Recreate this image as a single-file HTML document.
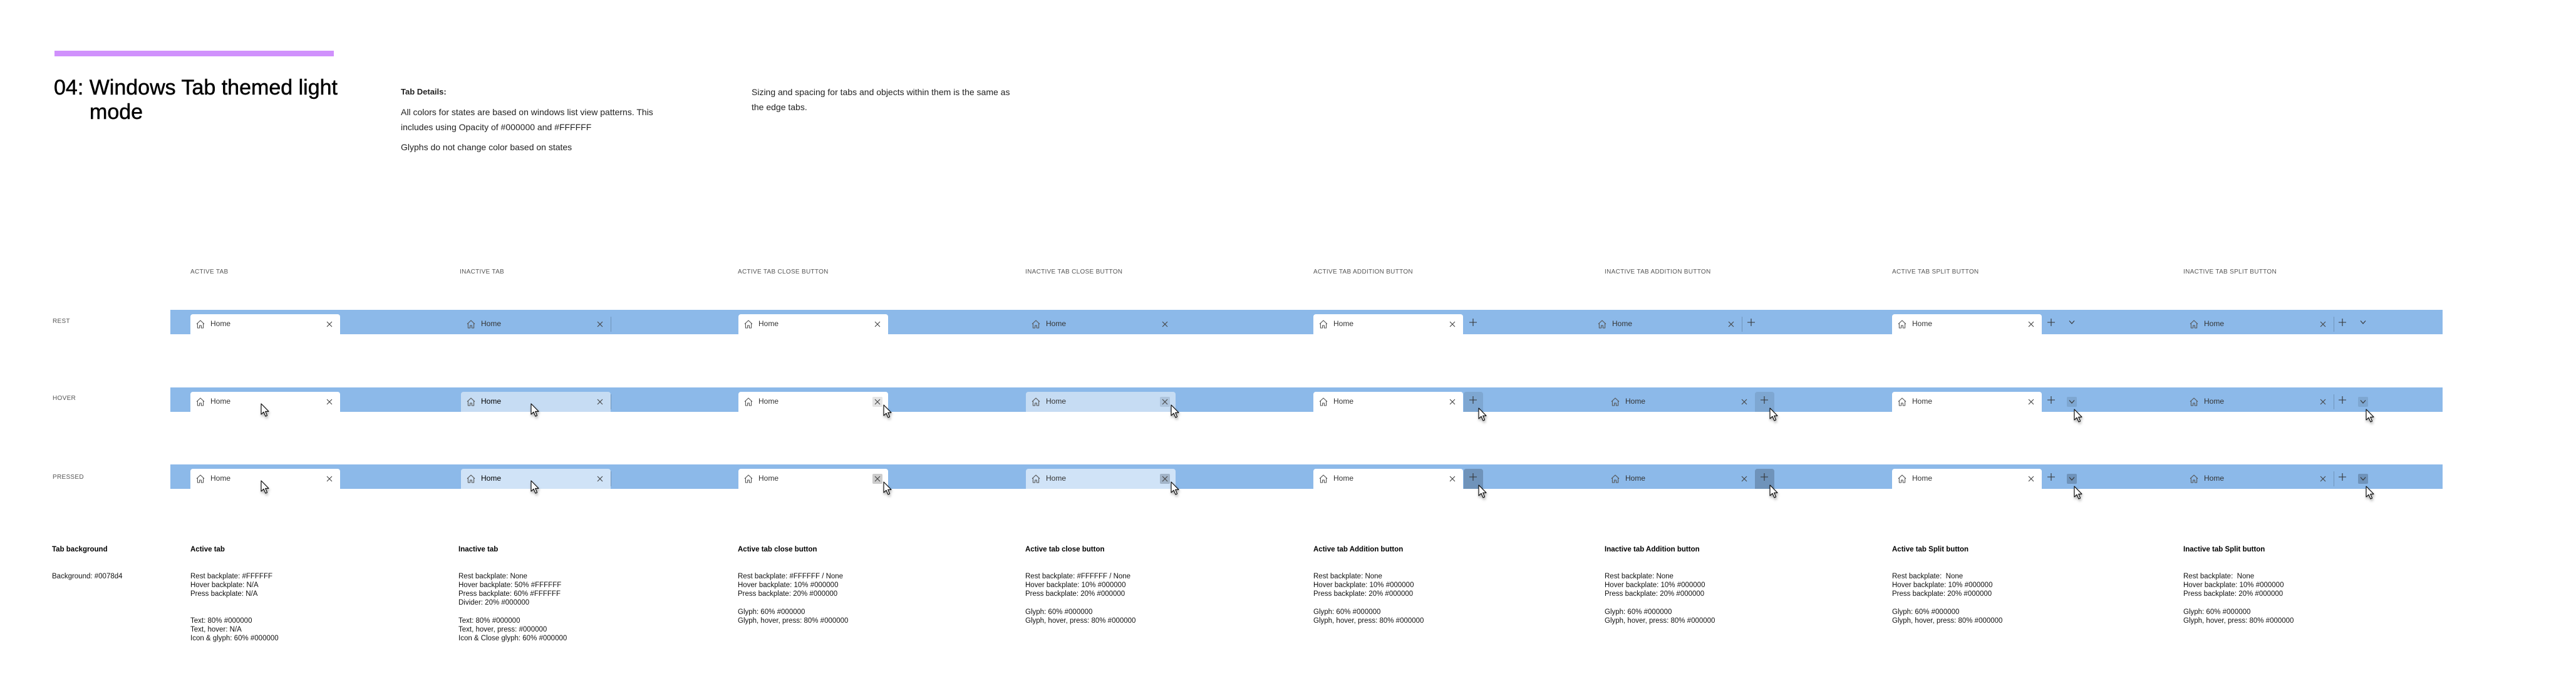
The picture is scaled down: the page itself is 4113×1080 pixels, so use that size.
<!DOCTYPE html>
<html><head><meta charset="utf-8">
<style>
*{margin:0;padding:0;box-sizing:border-box}
body{width:4113px;height:1080px;background:#fff;position:relative;overflow:hidden;font-family:"Liberation Sans",sans-serif;color:#000}
.a{position:absolute;white-space:nowrap}
.bar{position:absolute;left:87px;top:81px;width:446px;height:9px;background:#D091FC}
.title{font-size:34px;line-height:39px;-webkit-text-stroke:0.5px #000}
.p{font-size:14px;color:#222}
.hd{font-size:10px;color:#555;letter-spacing:0.3px}
.band{position:absolute;left:272px;width:3628px;height:39px;background:#8CB9E9}
.tab{position:absolute;width:239px;height:32px;border-radius:4px 4px 0 0}
.tab .h{position:absolute;left:9px;top:9px}
.tab .t{position:absolute;left:32px;top:8px;font-size:12px;color:#333}
.tab .x{position:absolute;left:214px;top:8px;width:16px;height:16px;border-radius:2px}
.x svg{position:absolute;left:3px;top:3px}
.w{background:#fff}
.hv{background:#C6DCF3}
.pr{background:#D0E3F7}
.div{position:absolute;width:1px;height:24px;background:rgba(0,0,0,.2)}
.btn{position:absolute;width:31px;height:32px;border-radius:4px 4px 0 0}
.sbtn{position:absolute;width:16px;height:16px;border-radius:2px}
.g{position:absolute}
.cur{position:absolute;filter:drop-shadow(1px 3px 2px rgba(0,0,0,.35))}
.b{font-size:11.5px;line-height:14px;color:#111}
.bh{font-size:11.5px;font-weight:bold;color:#000}
</style></head><body>
<div class="bar"></div>
<div class="a title" style="left:86px;top:121px">04: Windows Tab themed light</div>
<div class="a title" style="left:143px;top:160px">mode</div>
<div class="a p" style="left:640px;top:139px;font-weight:bold;font-size:13px">Tab Details:</div>
<div class="a p" style="left:640px;top:171px">All colors for states are based on windows list view patterns. This</div>
<div class="a p" style="left:640px;top:195px">includes using Opacity of #000000 and #FFFFFF</div>
<div class="a p" style="left:640px;top:227px">Glyphs do not change color based on states</div>
<div class="a p" style="left:1200px;top:139px">Sizing and spacing for tabs and objects within them is the same as</div>
<div class="a p" style="left:1200px;top:163px">the edge tabs.</div>

<div class="a hd" style="left:304px;top:429px">ACTIVE TAB</div>
<div class="a hd" style="left:734px;top:429px">INACTIVE TAB</div>
<div class="a hd" style="left:1178px;top:429px">ACTIVE TAB CLOSE BUTTON</div>
<div class="a hd" style="left:1637px;top:429px">INACTIVE TAB CLOSE BUTTON</div>
<div class="a hd" style="left:2097px;top:429px">ACTIVE TAB ADDITION BUTTON</div>
<div class="a hd" style="left:2562px;top:429px">INACTIVE TAB ADDITION BUTTON</div>
<div class="a hd" style="left:3021px;top:429px">ACTIVE TAB SPLIT BUTTON</div>
<div class="a hd" style="left:3486px;top:429px">INACTIVE TAB SPLIT BUTTON</div>

<div class="a hd" style="left:84px;top:508px">REST</div>
<div class="a hd" style="left:84px;top:631px">HOVER</div>
<div class="a hd" style="left:84px;top:757px">PRESSED</div>

<svg width="0" height="0" style="position:absolute">
<defs>
<symbol id="home" viewBox="0 0 14 14"><path d="M1 6.6 7 1l6 5.6M2.4 5.4V13h3.2V9h2.8v4h3.2V5.4" fill="none" stroke="#555" stroke-width="1.1" stroke-linejoin="round"/></symbol>
<symbol id="xx" viewBox="0 0 10 10"><path d="M1 1 9 9M9 1 1 9" stroke="#444" stroke-width="1.1"/></symbol>
<symbol id="pl" viewBox="0 0 12 12"><path d="M6 0V12M0 6H12" stroke="#333" stroke-width="1.1"/></symbol>
<symbol id="ch" viewBox="0 0 10 6"><path d="M1 .5 5 5 9 .5" fill="none" stroke="#333" stroke-width="1.1"/></symbol>
<symbol id="cu" viewBox="0 0 14 22"><path d="M1 1V18L5 14.2 8 21 10.6 19.9 7.7 13.3H13Z" fill="#fff" stroke="#000" stroke-width="1.1" stroke-linejoin="round"/></symbol>
</defs></svg>

<!-- bands -->
<div class="band" style="top:495px"></div>
<div class="band" style="top:619px"></div>
<div class="band" style="top:742px"></div>

<!-- ROW REST (495) -->
<div class="tab w" style="left:304px;top:502px"><svg class="h" width="14" height="14"><use href="#home"/></svg><span class="t">Home</span><span class="x"><svg width="10" height="10"><use href="#xx"/></svg></span></div>
<div class="tab" style="left:736px;top:502px"><svg class="h" width="14" height="14"><use href="#home"/></svg><span class="t">Home</span><span class="x"><svg width="10" height="10"><use href="#xx"/></svg></span></div>
<div class="div" style="left:975px;top:506px"></div>
<div class="tab w" style="left:1179px;top:502px"><svg class="h" width="14" height="14"><use href="#home"/></svg><span class="t">Home</span><span class="x"><svg width="10" height="10"><use href="#xx"/></svg></span></div>
<div class="tab" style="left:1638px;top:502px"><svg class="h" width="14" height="14"><use href="#home"/></svg><span class="t">Home</span><span class="x"><svg width="10" height="10"><use href="#xx"/></svg></span></div>
<div class="tab w" style="left:2097px;top:502px"><svg class="h" width="14" height="14"><use href="#home"/></svg><span class="t">Home</span><span class="x"><svg width="10" height="10"><use href="#xx"/></svg></span></div>
<svg class="g" style="left:2346px;top:509px" width="12" height="12"><use href="#pl"/></svg>
<div class="tab" style="left:2542px;top:502px"><svg class="h" width="14" height="14"><use href="#home"/></svg><span class="t">Home</span><span class="x"><svg width="10" height="10"><use href="#xx"/></svg></span></div>
<div class="div" style="left:2781px;top:506px"></div>
<svg class="g" style="left:2790px;top:509px" width="12" height="12"><use href="#pl"/></svg>
<div class="tab w" style="left:3021px;top:502px"><svg class="h" width="14" height="14"><use href="#home"/></svg><span class="t">Home</span><span class="x"><svg width="10" height="10"><use href="#xx"/></svg></span></div>
<svg class="g" style="left:3269px;top:509px" width="12" height="12"><use href="#pl"/></svg>
<svg class="g" style="left:3303px;top:512px" width="10" height="6"><use href="#ch"/></svg>
<div class="tab" style="left:3487px;top:502px"><svg class="h" width="14" height="14"><use href="#home"/></svg><span class="t">Home</span><span class="x"><svg width="10" height="10"><use href="#xx"/></svg></span></div>
<div class="div" style="left:3726px;top:506px"></div>
<svg class="g" style="left:3734px;top:509px" width="12" height="12"><use href="#pl"/></svg>
<svg class="g" style="left:3768px;top:512px" width="10" height="6"><use href="#ch"/></svg>

<!-- ROW HOVER (619) -->
<div class="tab w" style="left:304px;top:626px"><svg class="h" width="14" height="14"><use href="#home"/></svg><span class="t">Home</span><span class="x"><svg width="10" height="10"><use href="#xx"/></svg></span></div>
<div class="tab hv" style="left:736px;top:626px"><svg class="h" width="14" height="14"><use href="#home"/></svg><span class="t" style="color:#000">Home</span><span class="x"><svg width="10" height="10"><use href="#xx"/></svg></span></div>
<div class="div" style="left:975px;top:630px"></div>
<div class="tab w" style="left:1179px;top:626px"><svg class="h" width="14" height="14"><use href="#home"/></svg><span class="t">Home</span><span class="x" style="background:#E5E5E5"><svg width="10" height="10"><use href="#xx"/></svg></span></div>
<div class="tab hv" style="left:1638px;top:626px"><svg class="h" width="14" height="14"><use href="#home"/></svg><span class="t">Home</span><span class="x" style="background:#AEC4DC"><svg width="10" height="10"><use href="#xx"/></svg></span></div>
<div class="tab w" style="left:2097px;top:626px"><svg class="h" width="14" height="14"><use href="#home"/></svg><span class="t">Home</span><span class="x"><svg width="10" height="10"><use href="#xx"/></svg></span></div>
<div class="btn" style="left:2337px;top:626px;background:#7EA7D2"></div>
<svg class="g" style="left:2346px;top:633px" width="12" height="12"><use href="#pl"/></svg>
<div class="tab" style="left:2563px;top:626px"><svg class="h" width="14" height="14"><use href="#home"/></svg><span class="t">Home</span><span class="x"><svg width="10" height="10"><use href="#xx"/></svg></span></div>
<div class="btn" style="left:2802px;top:626px;background:#7EA7D2"></div>
<svg class="g" style="left:2811px;top:633px" width="12" height="12"><use href="#pl"/></svg>
<div class="tab w" style="left:3021px;top:626px"><svg class="h" width="14" height="14"><use href="#home"/></svg><span class="t">Home</span><span class="x"><svg width="10" height="10"><use href="#xx"/></svg></span></div>
<svg class="g" style="left:3269px;top:633px" width="12" height="12"><use href="#pl"/></svg>
<div class="sbtn" style="left:3300px;top:634px;background:#7EA7D2"></div>
<svg class="g" style="left:3303px;top:639px" width="10" height="6"><use href="#ch"/></svg>
<div class="tab" style="left:3487px;top:626px"><svg class="h" width="14" height="14"><use href="#home"/></svg><span class="t">Home</span><span class="x"><svg width="10" height="10"><use href="#xx"/></svg></span></div>
<div class="div" style="left:3726px;top:630px"></div>
<svg class="g" style="left:3734px;top:633px" width="12" height="12"><use href="#pl"/></svg>
<div class="sbtn" style="left:3765px;top:634px;background:#7EA7D2"></div>
<svg class="g" style="left:3768px;top:639px" width="10" height="6"><use href="#ch"/></svg>

<!-- ROW PRESSED (742) -->
<div class="tab w" style="left:304px;top:749px"><svg class="h" width="14" height="14"><use href="#home"/></svg><span class="t">Home</span><span class="x"><svg width="10" height="10"><use href="#xx"/></svg></span></div>
<div class="tab pr" style="left:736px;top:749px"><svg class="h" width="14" height="14"><use href="#home"/></svg><span class="t" style="color:#000">Home</span><span class="x"><svg width="10" height="10"><use href="#xx"/></svg></span></div>
<div class="div" style="left:975px;top:753px"></div>
<div class="tab w" style="left:1179px;top:749px"><svg class="h" width="14" height="14"><use href="#home"/></svg><span class="t">Home</span><span class="x" style="background:#CCCCCC"><svg width="10" height="10"><use href="#xx"/></svg></span></div>
<div class="tab pr" style="left:1638px;top:749px"><svg class="h" width="14" height="14"><use href="#home"/></svg><span class="t">Home</span><span class="x" style="background:#A2B4C8"><svg width="10" height="10"><use href="#xx"/></svg></span></div>
<div class="tab w" style="left:2097px;top:749px"><svg class="h" width="14" height="14"><use href="#home"/></svg><span class="t">Home</span><span class="x"><svg width="10" height="10"><use href="#xx"/></svg></span></div>
<div class="btn" style="left:2337px;top:749px;background:#6F93BA"></div>
<svg class="g" style="left:2346px;top:756px" width="12" height="12"><use href="#pl"/></svg>
<div class="tab" style="left:2563px;top:749px"><svg class="h" width="14" height="14"><use href="#home"/></svg><span class="t">Home</span><span class="x"><svg width="10" height="10"><use href="#xx"/></svg></span></div>
<div class="btn" style="left:2802px;top:749px;background:#6F93BA"></div>
<svg class="g" style="left:2811px;top:756px" width="12" height="12"><use href="#pl"/></svg>
<div class="tab w" style="left:3021px;top:749px"><svg class="h" width="14" height="14"><use href="#home"/></svg><span class="t">Home</span><span class="x"><svg width="10" height="10"><use href="#xx"/></svg></span></div>
<svg class="g" style="left:3269px;top:756px" width="12" height="12"><use href="#pl"/></svg>
<div class="sbtn" style="left:3300px;top:757px;background:#6F93BA"></div>
<svg class="g" style="left:3303px;top:762px" width="10" height="6"><use href="#ch"/></svg>
<div class="tab" style="left:3487px;top:749px"><svg class="h" width="14" height="14"><use href="#home"/></svg><span class="t">Home</span><span class="x"><svg width="10" height="10"><use href="#xx"/></svg></span></div>
<div class="div" style="left:3726px;top:753px"></div>
<svg class="g" style="left:3734px;top:756px" width="12" height="12"><use href="#pl"/></svg>
<div class="sbtn" style="left:3765px;top:757px;background:#6F93BA"></div>
<svg class="g" style="left:3768px;top:762px" width="10" height="6"><use href="#ch"/></svg>

<!-- cursors -->
<svg class="cur" style="left:416px;top:644px" width="14" height="22"><use href="#cu"/></svg>
<svg class="cur" style="left:847px;top:644px" width="14" height="22"><use href="#cu"/></svg>
<svg class="cur" style="left:1410px;top:646px" width="14" height="22"><use href="#cu"/></svg>
<svg class="cur" style="left:1869px;top:646px" width="14" height="22"><use href="#cu"/></svg>
<svg class="cur" style="left:2360px;top:651px" width="14" height="22"><use href="#cu"/></svg>
<svg class="cur" style="left:2825px;top:651px" width="14" height="22"><use href="#cu"/></svg>
<svg class="cur" style="left:3311px;top:653px" width="14" height="22"><use href="#cu"/></svg>
<svg class="cur" style="left:3777px;top:653px" width="14" height="22"><use href="#cu"/></svg>

<svg class="cur" style="left:416px;top:767px" width="14" height="22"><use href="#cu"/></svg>
<svg class="cur" style="left:847px;top:767px" width="14" height="22"><use href="#cu"/></svg>
<svg class="cur" style="left:1410px;top:769px" width="14" height="22"><use href="#cu"/></svg>
<svg class="cur" style="left:1869px;top:769px" width="14" height="22"><use href="#cu"/></svg>
<svg class="cur" style="left:2360px;top:774px" width="14" height="22"><use href="#cu"/></svg>
<svg class="cur" style="left:2825px;top:774px" width="14" height="22"><use href="#cu"/></svg>
<svg class="cur" style="left:3311px;top:776px" width="14" height="22"><use href="#cu"/></svg>
<svg class="cur" style="left:3777px;top:776px" width="14" height="22"><use href="#cu"/></svg>

<!-- bottom notes -->
<div class="a bh" style="left:83px;top:872px">Tab background</div>
<div class="a b" style="left:83px;top:914px">Background: #0078d4</div>

<div class="a bh" style="left:304px;top:872px">Active tab</div>
<div class="a b" style="left:304px;top:914px">Rest backplate: #FFFFFF<br>Hover backplate: N/A<br>Press backplate: N/A</div>
<div class="a b" style="left:304px;top:985px">Text: 80% #000000<br>Text, hover: N/A<br>Icon &amp; glyph: 60% #000000</div>

<div class="a bh" style="left:732px;top:872px">Inactive tab</div>
<div class="a b" style="left:732px;top:914px">Rest backplate: None<br>Hover backplate: 50% #FFFFFF<br>Press backplate: 60% #FFFFFF<br>Divider: 20% #000000</div>
<div class="a b" style="left:732px;top:985px">Text: 80% #000000<br>Text, hover, press: #000000<br>Icon &amp; Close glyph: 60% #000000</div>

<div class="a bh" style="left:1178px;top:872px">Active tab close button</div>
<div class="a b" style="left:1178px;top:914px">Rest backplate: #FFFFFF / None<br>Hover backplate: 10% #000000<br>Press backplate: 20% #000000</div>
<div class="a b" style="left:1178px;top:971px">Glyph: 60% #000000<br>Glyph, hover, press: 80% #000000</div>

<div class="a bh" style="left:1637px;top:872px">Active tab close button</div>
<div class="a b" style="left:1637px;top:914px">Rest backplate: #FFFFFF / None<br>Hover backplate: 10% #000000<br>Press backplate: 20% #000000</div>
<div class="a b" style="left:1637px;top:971px">Glyph: 60% #000000<br>Glyph, hover, press: 80% #000000</div>

<div class="a bh" style="left:2097px;top:872px">Active tab Addition button</div>
<div class="a b" style="left:2097px;top:914px">Rest backplate: None<br>Hover backplate: 10% #000000<br>Press backplate: 20% #000000</div>
<div class="a b" style="left:2097px;top:971px">Glyph: 60% #000000<br>Glyph, hover, press: 80% #000000</div>

<div class="a bh" style="left:2562px;top:872px">Inactive tab Addition button</div>
<div class="a b" style="left:2562px;top:914px">Rest backplate: None<br>Hover backplate: 10% #000000<br>Press backplate: 20% #000000</div>
<div class="a b" style="left:2562px;top:971px">Glyph: 60% #000000<br>Glyph, hover, press: 80% #000000</div>

<div class="a bh" style="left:3021px;top:872px">Active tab Split button</div>
<div class="a b" style="left:3021px;top:914px">Rest backplate:&nbsp; None<br>Hover backplate: 10% #000000<br>Press backplate: 20% #000000</div>
<div class="a b" style="left:3021px;top:971px">Glyph: 60% #000000<br>Glyph, hover, press: 80% #000000</div>

<div class="a bh" style="left:3486px;top:872px">Inactive tab Split button</div>
<div class="a b" style="left:3486px;top:914px">Rest backplate:&nbsp; None<br>Hover backplate: 10% #000000<br>Press backplate: 20% #000000</div>
<div class="a b" style="left:3486px;top:971px">Glyph: 60% #000000<br>Glyph, hover, press: 80% #000000</div>
</body></html>
